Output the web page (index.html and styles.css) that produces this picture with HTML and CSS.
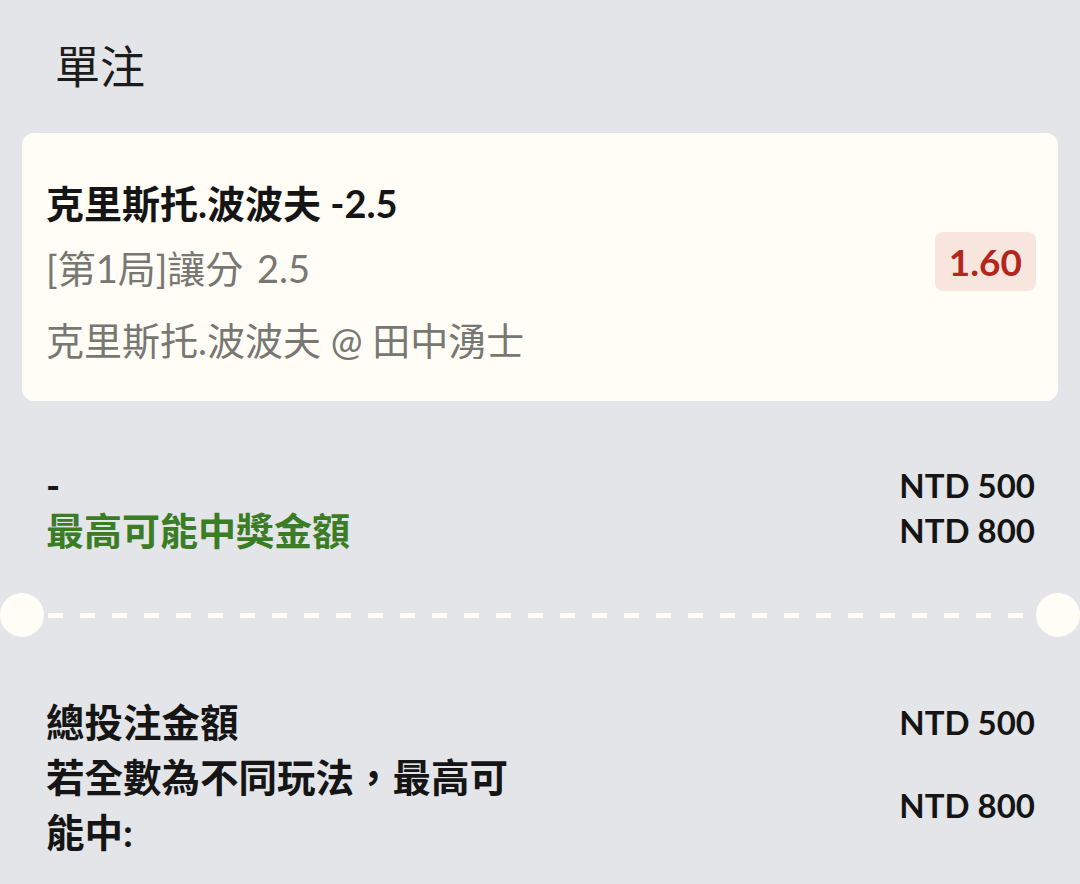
FILE: index.html
```html
<!DOCTYPE html>
<html>
<head>
    <title>單注</title>
    <link rel="stylesheet" href="styles.css">
</head>
<body>
    <h1 class="page-title">單注</h1>

    <div class="bet-card">
        <div class="bet-info">
            <div class="bet-name">克里斯托.波波夫 -2.5</div>
            <div class="bet-line">[第1局]讓分 2.5</div>
            <div class="bet-line match">克里斯托.波波夫 @ 田中湧士</div>
        </div>
        <div class="odds">1.60</div>
    </div>

    <div class="summary">
        <div class="summary-row">
            <span>-</span>
            <span class="amount">NTD 500</span>
        </div>
        <div class="summary-row">
            <span class="win-label">最高可能中獎金額</span>
            <span class="amount">NTD 800</span>
        </div>
    </div>

    <div class="divider">
        <span class="hole"></span>
        <span class="dashes"></span>
        <span class="hole"></span>
    </div>

    <div class="totals">
        <div class="total-row">
            <span class="total-label">總投注金額</span>
            <span class="amount">NTD 500</span>
        </div>
        <div class="total-row">
            <span class="total-label">若全數為不同玩法，最高可能中:</span>
            <span class="amount">NTD 800</span>
        </div>
    </div>
</body>
</html>
```

FILE: styles.css
```css
body {
    margin: 0;
    background-color: #e4e5e8;
    font-family: Lato, "Noto Sans CJK TC", sans-serif;
    color: #151515;
}

.page-title {
    margin: 0;
    padding: 39px 0 0 55px;
    font-size: 45px;
    font-weight: 400;
    line-height: 56px;
    color: #1c1c1c;
}

.bet-card {
    margin: 38px 22px 0 22px;
    padding: 42px 22px 33px 24px;
    background-color: #fffdf5;
    border-radius: 12px;
    display: flex;
    justify-content: space-between;
    align-items: center;
}

.bet-info {
    display: flex;
    flex-direction: column;
    gap: 9px;
}

.bet-name {
    font-size: 38px;
    font-weight: 700;
    line-height: 56px;
}

.bet-line {
    font-size: 38px;
    line-height: 56px;
    color: #777773;
    word-spacing: 4px;
}

.bet-line.match {
    margin-top: 7px;
    word-spacing: 0;
}

.odds {
    background-color: #f8e6de;
    color: #b3261e;
    font-size: 37px;
    font-weight: 700;
    height: 59px;
    line-height: 59px;
    padding: 0 14px;
    border-radius: 8px;
    margin-bottom: 21px;
}

.summary {
    padding: 62px 45px 0 46px;
}

.summary-row {
    display: flex;
    justify-content: space-between;
    align-items: center;
    font-size: 38px;
    font-weight: 700;
    line-height: 45px;
}

.win-label {
    color: #3b7d25;
}

.amount {
    font-size: 33px;
    font-weight: 700;
}

.divider {
    margin-top: 40px;
    display: flex;
    align-items: center;
}

.hole {
    width: 44px;
    height: 44px;
    border-radius: 50%;
    background-color: #fffdf5;
}

.dashes {
    flex: 1;
    height: 5px;
    margin: 0 4px;
    background: repeating-linear-gradient(90deg, #fffdf5 0 15px, transparent 15px 32px);
}

.totals {
    padding: 58px 45px 0 46px;
}

.total-row {
    display: flex;
    justify-content: space-between;
    align-items: center;
    font-size: 38.5px;
    font-weight: 700;
    line-height: 55px;
}

.total-label {
    width: 475px;
}
```
